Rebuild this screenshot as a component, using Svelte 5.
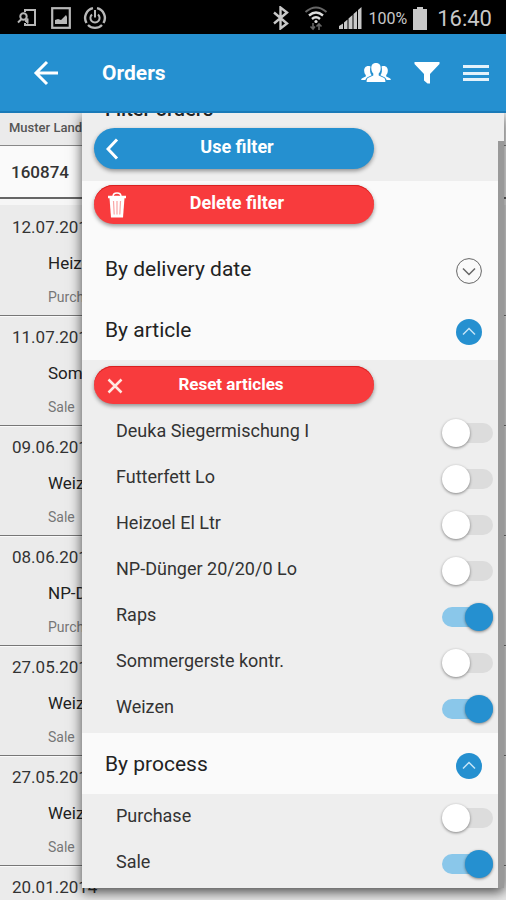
<script>
  let articles = $state([
    { name: 'Deuka Siegermischung I', on: false },
    { name: 'Futterfett Lo', on: false },
    { name: 'Heizoel El Ltr', on: false },
    { name: 'NP-Dünger 20/20/0 Lo', on: false },
    { name: 'Raps', on: true },
    { name: 'Sommergerste kontr.', on: false },
    { name: 'Weizen', on: true }
  ])

  let processes = $state([
    { name: 'Purchase', on: false },
    { name: 'Sale', on: true }
  ])

  const orders = [
    { date: '12.07.2017', article: 'Heizoel El Ltr', process: 'Purchase' },
    { date: '11.07.2017', article: 'Sommergerste kontr.', process: 'Sale' },
    { date: '09.06.2017', article: 'Weizen', process: 'Sale' },
    { date: '08.06.2017', article: 'NP-Dünger 20/20/0 Lo', process: 'Purchase' },
    { date: '27.05.2017', article: 'Weizen', process: 'Sale' },
    { date: '27.05.2017', article: 'Weizen', process: 'Sale' },
    { date: '20.01.2014', article: 'Weizen', process: 'Sale' }
  ]

  let open = $state({ date: false, article: true, process: true })

  function reset(list) {
    for (const item of list) item.on = false
  }

  function resetAll() {
    reset(articles)
    reset(processes)
  }
</script>

{#snippet sectionHead(key, title)}
  <button class="section-head" aria-expanded={open[key]} onclick={() => (open[key] = !open[key])}>
    <span>{title}</span>
    <svg class="toggle-icon" viewBox="0 0 26 26" width="26" height="26" fill="none">
      {#if open[key]}
        <circle cx="13" cy="13" r="13" fill="#2590d0" />
        <path d="M7 15.5l6-6 6 6" stroke="#c4e4f7" stroke-width="1.5" />
      {:else}
        <circle cx="13" cy="13" r="12.4" stroke="#666" />
        <path d="M7 10.5l6 6 6-6" stroke="#666" stroke-width="1.5" />
      {/if}
    </svg>
  </button>
{/snippet}

{#snippet switches(list)}
  {#each list as item}
    <label class="option">
      <span>{item.name}</span>
      <input type="checkbox" role="switch" bind:checked={item.on} />
    </label>
  {/each}
{/snippet}

<div class="screen">
  <div class="status">
    <svg width="20" height="20" viewBox="0 0 20 20" fill="none" stroke="#b8b8b8" stroke-width="2">
      <path d="M8 4V2h10v15H8v-2" />
      <circle cx="6.5" cy="8.5" r="3.2" />
      <path d="M4.5 11L1 14.5" />
      <path d="M8 13l3-2.5v5z" fill="#b8b8b8" stroke-width="1" />
    </svg>
    <svg class="picture" width="20" height="22" viewBox="0 0 20 22">
      <rect x="1.2" y="1.2" width="17.6" height="19.6" fill="none" stroke="#b8b8b8" stroke-width="2.2" />
      <path d="M4 17v-4l3-1 3 1 5-5 1 2v7z" fill="#b8b8b8" />
    </svg>
    <svg class="ring" width="24" height="24" viewBox="0 0 24 24" fill="none" stroke="#b8b8b8" stroke-width="2.4">
      <path d="M10 2.2A10 10 0 0 0 3.5 17M5 19a10 10 0 0 0 14 0M20.5 17A10 10 0 0 0 14 2.2" />
      <path d="M9 8.5a4.6 4.6 0 1 0 6 0M12 4v7.500" stroke-width="2" />
    </svg>
    <span class="spacer"></span>
    <svg width="18" height="24" viewBox="0 0 18 24" fill="none" stroke="#c8c8c8" stroke-width="2.4">
      <path d="M2 6.5l13 11-6.5 5V1.5l6.5 5L2 17.5" />
    </svg>
    <svg class="wifi" width="24" height="25" viewBox="0 0 24 25" fill="none">
      <path d="M1.5 6q10.5-9 21 0" stroke="#666" stroke-width="2" />
      <path d="M5 9.5q7-6 14 0M8 13q4-3.500 8 0" stroke="#ddd" stroke-width="2.4" />
      <circle cx="12" cy="15.5" r="1.6" fill="#ddd" />
      <path d="M9 17v6M6.5 20.5L9 23l2-2.5M15 24v-6M12.5 20.5L15 18l2.5 2.5" stroke="#666" stroke-width="1.6" />
    </svg>
    <svg class="signal" width="24" height="24" viewBox="0 0 24 24" fill="#c8c8c8">
      <path d="M1 20l4-2.5V23H1zM6 16.5l3.500-3V23H6zM10.500 12.500l4-3.500v14h-4zM15.500 8l3.500-3v18h-3.500zM20 4l3.500-3v22H20z" />
    </svg>
    <span class="percent">100%</span>
    <svg class="battery" width="14" height="23" viewBox="0 0 14 23" fill="#c8c8c8">
      <path d="M4 0h6v2h4v21H0V2h4z" />
    </svg>
    <span class="clock">16:40</span>
  </div>

  <header>
    <button class="icon-btn" aria-label="Back">
      <svg width="26" height="26" viewBox="0 0 26 26" fill="none" stroke="#fff" stroke-width="3">
        <path d="M14 2L3 13l11 11M3 13h22" />
      </svg>
    </button>
    <h1>Orders</h1>
    <button class="icon-btn" aria-label="Customers">
      <svg width="30" height="20" viewBox="0 0 30 20" fill="#fff">
        <path d="M15 0c3.3 0 4.9 2.2 4.7 5.500-.1 2.500-1 4-2 5v2l5 2.200c1.200.6 1.700 1.700 1.700 4.300H5.600c0-2.600.5-3.700 1.700-4.300l5-2.200v-2c-1-1-1.900-2.500-2-5C10.100 2.200 11.700 0 15 0z" />
        <path d="M9.500 3.500C5.500 2 2.900 4.500 3.200 8c.1 2 .7 3.300 1.600 4v1.500L1.600 15C.6 15.500.2 16 .2 17h4.200c.6-1.700 1.300-2.500 2.600-3.100l3.600-1.600c-1.600-2-2-5.300-1.100-8.800z" />
        <path d="M20.500 3.500c4-1.500 6.600 1 6.300 4.500-.1 2-.7 3.300-1.600 4v1.500l3.200 1.500c1 .5 1.400 1 1.400 2h-4.200c-.6-1.700-1.300-2.500-2.600-3.100l-3.600-1.600c1.600-2 2-5.300 1.100-8.800z" />
      </svg>
    </button>
    <button class="icon-btn" aria-label="Filter">
      <svg width="26" height="22" viewBox="0 0 26 22" fill="#fff">
        <path d="M.5 0h25v2L16 12v9.500h-2.500L10 18.500V12L.5 2z" />
      </svg>
    </button>
    <button class="icon-btn" aria-label="Menu">
      <svg width="26" height="18" viewBox="0 0 26 18" fill="#e4f2fb">
        <path d="M0 1h26v3H0zM0 8h26v3H0zM0 14h26v3H0z" />
      </svg>
    </button>
  </header>

  <main>
    <div class="list-head">Muster Landwirt</div>
    <div class="customer">160874</div>
    <ul>
      {#each orders as order}
        <li>
          <div class="date">{order.date}</div>
          <div class="article">{order.article}</div>
          <div class="process">{order.process}</div>
        </li>
      {/each}
    </ul>

    <aside>
      <div class="clip">
        <div class="block top">
          <h2>Filter orders</h2>
          <button class="pill">
            <svg width="14" height="24" viewBox="0 0 14 24" fill="none" stroke="#fff" stroke-width="3">
              <path d="M11 2.5L2 12l9 9.5" />
            </svg>
            <span>Use filter</span>
          </button>
        </div>

        <div class="block delete">
          <button class="pill red" onclick={resetAll}>
            <svg width="22" height="26" viewBox="0 0 22 26" fill="none" stroke="#fff">
              <path d="M2 5h18" stroke-width="2.5" />
              <path d="M7 4.5q0-3.5 4-3.5t4 3.5" stroke-width="1.5" />
              <path d="M3.5 6h15L17 25.5H5z" fill="#fff" stroke="none" />
              <path d="M7.500 9l.7 13.500M11 9v13.500M14.500 9l-.7 13.500" stroke="#f9a5a5" stroke-width="1.2" />
            </svg>
            <span>Delete filter</span>
          </button>
        </div>

        {@render sectionHead('date', 'By delivery date')}
        {@render sectionHead('article', 'By article')}
        {#if open.article}
          <div class="block articles">
            <button class="pill red small" onclick={() => reset(articles)}>
              <svg width="18" height="18" viewBox="0 0 18 18" fill="none" stroke="#ffe8e0" stroke-width="2.5">
                <path d="M2.5 3.5l13 13M15.5 3.5l-13 13" />
              </svg>
              <span>Reset articles</span>
            </button>
            {@render switches(articles)}
          </div>
        {/if}

        {@render sectionHead('process', 'By process')}
        {#if open.process}
          <div class="block processes">
            {@render switches(processes)}
          </div>
        {/if}
      </div>
      <div class="scrollbar"></div>
    </aside>
  </main>
</div>

<style>
  :global(body) {
    margin: 0;
    background: #ebebeb;
  }

  .screen {
    height: 100vh;
    overflow: hidden;
    display: flex;
    flex-direction: column;
    font-family: Roboto, sans-serif;
    color: #222;
  }

  button {
    font-family: inherit;
    border: 0;
    padding: 0;
    background: none;
    cursor: pointer;
  }

  svg {
    display: block;
    flex: none;
  }

  .status {
    height: 34px;
    flex: none;
    box-sizing: border-box;
    display: flex;
    align-items: center;
    padding: 2px 14px 0 17px;
    background: #000;
    color: #c8c8c8;
  }

  .picture {
    margin-left: 14px;
  }

  .ring {
    margin-left: 12px;
  }

  .spacer {
    flex: 1;
  }

  .wifi {
    margin-left: 14px;
  }

  .signal {
    margin-left: 10px;
  }

  .percent {
    margin-left: 7px;
    font-size: 16px;
  }

  .battery {
    margin-left: 6px;
  }

  .clock {
    margin-left: 10px;
    font-size: 22px;
  }

  header {
    height: 79px;
    flex: none;
    box-sizing: border-box;
    display: flex;
    align-items: center;
    gap: 23px;
    padding: 0 17px 0 33px;
    background: #2590d0;
    border-bottom: 2px solid #1a7ab8;
    position: relative;
    z-index: 1;
  }

  h1 {
    flex: 1;
    margin: 0 0 0 20px;
    font-size: 21px;
    font-weight: 700;
    color: #fff;
  }

  main {
    flex: 1;
    min-height: 0;
    position: relative;
    background: #ebebeb;
  }

  .list-head {
    height: 32px;
    line-height: 30px;
    padding-left: 9px;
    border-bottom: 1px solid #888;
    font-size: 13px;
    font-weight: 500;
    color: #555;
  }

  .customer {
    height: 51px;
    line-height: 52px;
    padding-left: 11px;
    background: #fafafa;
    border-bottom: 2px solid #666;
    font-size: 17px;
    font-weight: 500;
    color: #333;
  }

  ul {
    margin: 0;
    padding: 1px 0 0;
    list-style: none;
    border-top: 6px solid #f6f6f6;
  }

  li {
    height: 110px;
    box-sizing: border-box;
    padding: 9px 0 0 12px;
    border-bottom: 1px solid #777;
    box-shadow: 0 1px 0 #fafafa;
    white-space: nowrap;
  }

  .date {
    font-size: 17px;
    line-height: 24px;
    color: #333;
  }

  .article {
    margin: 12px 0 0 36px;
    font-size: 17px;
    line-height: 24px;
  }

  .process {
    margin: 11px 0 0 36px;
    font-size: 14px;
    line-height: 22px;
    color: #777;
  }

  aside {
    position: absolute;
    top: 0;
    left: 82px;
    right: 2px;
    background: #eee;
    box-shadow: 0 4px 12px rgba(0, 0, 0, 0.7);
  }

  .clip {
    overflow: hidden;
  }

  .scrollbar {
    position: absolute;
    top: 28px;
    right: 0;
    bottom: 0;
    width: 6px;
    background: #999;
  }

  .block {
    padding-left: 12px;
    background: #eee;
  }

  .top {
    padding-bottom: 12px;
  }

  h2 {
    margin: -16px 0 7px 11px;
    font-size: 20px;
    line-height: 24px;
    font-weight: 500;
  }

  .delete {
    padding-top: 4px;
    padding-bottom: 14px;
    background: #fafafa;
  }

  .articles {
    padding-top: 6px;
    padding-bottom: 2px;
  }

  .processes {
    padding-bottom: 2px;
  }

  .pill {
    display: flex;
    align-items: center;
    width: 280px;
    max-width: 90%;
    height: 41px;
    padding: 0 8px 0 12px;
    border-radius: 21px;
    background: #2590d0;
    box-shadow: 0 2px 4px rgba(0, 0, 0, 0.4);
    color: #fff;
    font-size: 18px;
    font-weight: 700;
  }

  .pill span {
    flex: 1;
    padding: 0 12px 4px 0;
  }

  .pill.red {
    height: 39px;
    background: #f83b3d;
    box-shadow: inset 0 1px 0 #d82020, 0 2px 4px rgba(0, 0, 0, 0.4);
  }

  .pill.red span {
    padding-right: 20px;
  }

  .pill.small {
    height: 38px;
    margin-bottom: 5px;
    font-size: 17px;
  }

  .pill.small span {
    padding-right: 28px;
    padding-bottom: 2px;
  }

  .section-head {
    display: flex;
    align-items: center;
    justify-content: space-between;
    width: 100%;
    height: 61px;
    padding: 0 22px 0 23px;
    background: #fafafa;
    color: #222;
    font-size: 21px;
    text-align: left;
  }

  .toggle-icon {
    margin-top: 4px;
  }

  .option {
    display: flex;
    align-items: center;
    justify-content: space-between;
    height: 46px;
    padding: 0 11px 0 22px;
    font-size: 18px;
    color: #333;
    cursor: pointer;
  }

  .option span {
    padding-bottom: 3px;
  }

  .option input {
    appearance: none;
    position: relative;
    width: 51px;
    height: 20px;
    margin: 2px 0 0;
    border-radius: 10px;
    background: #dcdcdc;
    cursor: pointer;
  }

  .option input::before {
    content: '';
    position: absolute;
    top: -4px;
    left: 0;
    width: 28px;
    height: 28px;
    border-radius: 50%;
    background: #fff;
    box-shadow: 0 1px 3px rgba(0, 0, 0, 0.45);
  }

  .option input:checked {
    background: #8ac7ea;
  }

  .option input:checked::before {
    left: 23px;
    background: #2590d0;
  }
</style>
